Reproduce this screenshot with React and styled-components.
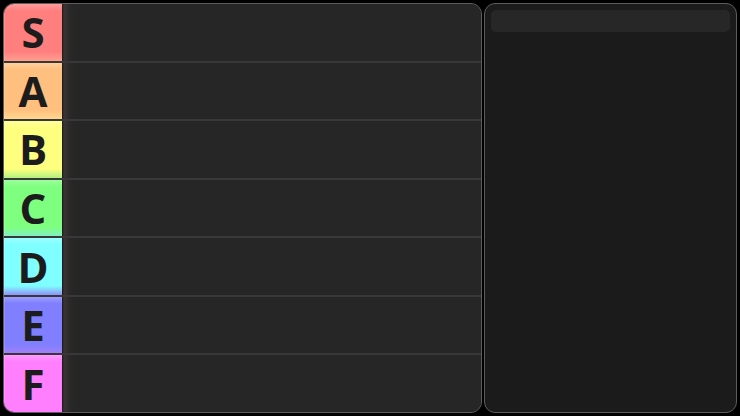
import React from "react";
import styled, { createGlobalStyle } from "styled-components";

const Global = createGlobalStyle`
  html, body { margin: 0; padding: 0; background: #000; }
  body { font-family: "Open Sans", "Noto Sans", sans-serif; }
`;

const Page = styled.div`
  width: 740px;
  height: 416px;
  box-sizing: border-box;
  padding: 3px;
  display: flex;
  gap: 2px;
  background: #000;
`;

const Board = styled.div`
  width: 479px;
  height: 410px;
  box-sizing: border-box;
  border: 1.5px solid #5c5c5c;
  border-radius: 11px;
  overflow: hidden;
  display: flex;
  flex-direction: column;
  background: #262626;
`;

const Row = styled.div`
  flex: 1;
  display: flex;
  min-height: 0;
  border-top: ${(p) => (p.$first ? "none" : "2px solid #383838")};
  box-shadow: ${(p) => (p.$first ? "none" : "inset 0 1px 0 #1a1a1a")};
`;

const Label = styled.div`
  width: 58px;
  flex: none;
  display: flex;
  align-items: center;
  justify-content: center;
  font-size: 42px;
  font-weight: 700;
  line-height: 1;
  color: #1c1c1c;
  background: linear-gradient(
    to bottom,
    ${(p) => p.$light} 0%,
    ${(p) => p.$color} 12%,
    ${(p) => p.$color} 84%,
    ${(p) => p.$next} 100%
  );
  box-shadow: inset 1px 0 0 rgba(255, 255, 255, 0.15);
`;

const Items = styled.div`
  flex: 1;
  background: linear-gradient(to right, #1a1818 0px, #3a3433 2px, #2a2828 8px, #262626 14px);
`;

const Side = styled.div`
  flex: 1;
  height: 410px;
  box-sizing: border-box;
  border: 1.5px solid #5c5c5c;
  border-radius: 11px;
  background: #1b1b1b;
  padding: 6px 6px;
`;

const Search = styled.div`
  height: 22px;
  border-radius: 5px;
  background: #272727;
`;

const tiers = [
  { n: "S", c: "#ff7f7f", l: "#ff9c9c", x: "#ffa090" },
  { n: "A", c: "#ffbf7f", l: "#ffd09c", x: "#ffd890" },
  { n: "B", c: "#ffff7f", l: "#ffff9c", x: "#b0f080" },
  { n: "C", c: "#7fff7f", l: "#9cff9c", x: "#80f0c0" },
  { n: "D", c: "#7fffff", l: "#9cffff", x: "#9090f8" },
  { n: "E", c: "#7f7fff", l: "#9c9cff", x: "#a080f8" },
  { n: "F", c: "#ff7fff", l: "#ff9cff", x: "#ff7fff" },
];

export default function App() {
  return (
    <>
      <Global />
      <Page>
        <Board>
          {tiers.map((t, i) => (
            <Row key={t.n} $first={i === 0}>
              <Label $color={t.c} $light={t.l} $next={t.x}>
                {t.n}
              </Label>
              <Items />
            </Row>
          ))}
        </Board>
        <Side>
          <Search />
        </Side>
      </Page>
    </>
  );
}
